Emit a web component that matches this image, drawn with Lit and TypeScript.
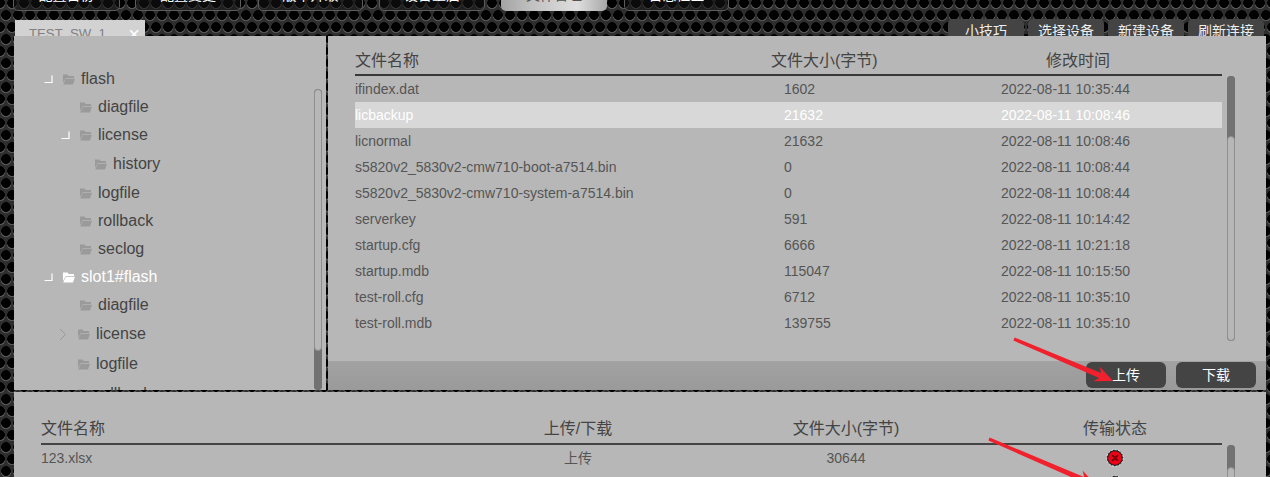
import { LitElement, html, css, svg } from "lit";
import { customElement } from "lit/decorators.js";

const NAV = [
  { t: "配置备份", w: 107, g: 15 },
  { t: "配置变更", w: 106, g: 17 },
  { t: "版本升级", w: 105, g: 16 },
  { t: "设备重启", w: 106, g: 16 },
  { t: "文件管理", w: 106, g: 17, active: true },
  { t: "日志检查", w: 105, g: 0 },
];
const ACTIONS = ["小技巧", "选择设备", "新建设备", "刷新连接"];

type Node = { n: string; x: number; e?: "open" | "closed"; m?: number; on?: boolean };
const TREE: Node[] = [
  { n: "flash", x: 30, e: "open" },
  { n: "diagfile", x: 47 },
  { n: "license", x: 47, e: "open" },
  { n: "history", x: 62, m: 1 },
  { n: "logfile", x: 47, m: 1 },
  { n: "rollback", x: 47 },
  { n: "seclog", x: 47 },
  { n: "slot1#flash", x: 30, e: "open", on: true },
  { n: "diagfile", x: 47 },
  { n: "license", x: 45, e: "closed", m: 1 },
  { n: "logfile", x: 45, m: 2 },
  { n: "rollback", x: 45, m: 2 },
];
const FILES = [
  ["ifindex.dat", "1602", "2022-08-11 10:35:44"],
  ["licbackup", "21632", "2022-08-11 10:08:46"],
  ["licnormal", "21632", "2022-08-11 10:08:46"],
  ["s5820v2_5830v2-cmw710-boot-a7514.bin", "0", "2022-08-11 10:08:44"],
  ["s5820v2_5830v2-cmw710-system-a7514.bin", "0", "2022-08-11 10:08:44"],
  ["serverkey", "591", "2022-08-11 10:14:42"],
  ["startup.cfg", "6666", "2022-08-11 10:21:18"],
  ["startup.mdb", "115047", "2022-08-11 10:15:50"],
  ["test-roll.cfg", "6712", "2022-08-11 10:35:10"],
  ["test-roll.mdb", "139755", "2022-08-11 10:35:10"],
];

const folder = svg`<svg class="folder" width="12" height="11" viewBox="0 0 12 11"><path d="M0 0.5h4.5l1.2 1.5H11v2H2.8L0 9z" fill="currentColor"/><path d="M2.8 4.7H12L10 10.5H0.2z" fill="currentColor"/></svg>`;
const exOpen = svg`<svg class="exp" width="9" height="9" viewBox="0 0 9 9"><path d="M8 0.5V7.5H0.5" fill="none" stroke="#fff" stroke-width="1.2"/></svg>`;
const exClosed = svg`<svg class="exp" width="9" height="13" viewBox="0 0 9 13"><path d="M1 1l5.5 5.5L1 12" fill="none" stroke="#999" stroke-width="1"/></svg>`;
const statusIcon = () => svg`<svg width="18" height="18" viewBox="0 0 18 18"><circle cx="9" cy="9" r="8.3" fill="#222" stroke="#e4e4e4" stroke-width="1" stroke-dasharray="2 1.5"/><circle cx="9" cy="9" r="6.8" fill="#f00014"/><path d="M6.2 6.2l5.6 5.6M11.8 6.2l-5.6 5.6" stroke="#6a000c" stroke-width="1.8"/></svg>`;

function arrow(x1: number, y1: number, x2: number, y2: number) {
  const dx = x2 - x1, dy = y2 - y1, len = Math.hypot(dx, dy);
  const ux = dx / len, uy = dy / len, nx = -uy, ny = ux;
  const p = (along: number, side: number) =>
    `${(x1 + ux * along + nx * side).toFixed(1)},${(y1 + uy * along + ny * side).toFixed(1)}`;
  const neck = len - 14;
  return svg`<polygon fill="#f0202c" points="${p(0, -1.6)} ${p(neck, -2.6)} ${p(neck - 4, -8)} ${p(len, 0)} ${p(neck - 4, 8)} ${p(neck, 2.6)} ${p(0, 1.6)}"/>`;
}

@customElement("app-root")
export class AppRoot extends LitElement {
  static styles = css`
    :host {
      display: block;
      position: relative;
      height: 100vh;
      overflow: hidden;
      font-family: "Liberation Sans", "Noto Sans CJK SC", sans-serif;
      font-size: 14px;
      color: #555;
      background-color: #2e2e2e;
      background-image:
        radial-gradient(circle at 6px 6px, #000 4.6px, rgba(0, 0, 0, 0) 5.1px),
        radial-gradient(circle at 12px 18px, #000 4.6px, rgba(0, 0, 0, 0) 5.1px),
        radial-gradient(circle at 0px 18px, #000 4.6px, rgba(0, 0, 0, 0) 5.1px),
        radial-gradient(circle at 6px 7px, #565656 4.8px, rgba(0, 0, 0, 0) 5.6px),
        radial-gradient(circle at 12px 19px, #565656 4.8px, rgba(0, 0, 0, 0) 5.6px),
        radial-gradient(circle at 0px 19px, #565656 4.8px, rgba(0, 0, 0, 0) 5.6px);
      background-size: 12px 24px;
      background-position: 0 9px;
    }
    .nav {
      display: flex;
      height: 11px;
      padding-left: 13px;
      align-items: flex-end;
    }
    .nav-item {
      flex: none;
      box-sizing: border-box;
      height: 30px;
      border: 1px solid #5c5c5c;
      border-radius: 0 0 5px 5px;
      background: rgba(20, 20, 20, 0.55);
      color: #fff;
      display: flex;
      align-items: flex-end;
      justify-content: center;
      line-height: 16px;
      padding-bottom: 7px;
    }
    .nav-item.active {
      border: none;
      color: #555;
      padding-bottom: 8px;
      background: linear-gradient(90deg, #a4a4a4 0%, #c2c2c2 30%, #dedede 72%, #a8a8a8 100%);
    }
    .bar {
      display: flex;
      justify-content: space-between;
      height: 25px;
      padding-left: 15px;
      padding-right: 6px;
    }
    .tab {
      box-sizing: border-box;
      width: 130px;
      height: 16px;
      margin-top: 9px;
      padding: 6px 5px 0 14px;
      background: #d2d2d2;
      color: #808080;
      font-size: 13.2px;
      line-height: 16px;
      overflow: hidden;
      display: flex;
      justify-content: space-between;
    }
    .tab .x {
      color: #fff;
      font-size: 20px;
      line-height: 16px;
    }
    .actions {
      display: flex;
      gap: 4px;
      margin-top: 8px;
    }
    .action {
      box-sizing: border-box;
      width: 76px;
      height: 17px;
      background: #444;
      color: #eee;
      border-radius: 5px 5px 0 0;
      text-align: center;
      line-height: 16px;
      padding-top: 4px;
      overflow: hidden;
    }
    .top {
      display: flex;
      gap: 2px;
      height: 354px;
      margin-left: 14px;
      margin-right: 4px;
    }
    .left {
      flex: none;
      width: 312px;
      background: #b7b7b7;
      display: flex;
      overflow: hidden;
    }
    .tree {
      flex: 1;
      padding-top: 29px;
      font-size: 16px;
      color: #444;
    }
    .node {
      display: flex;
      align-items: center;
      height: 28px;
      white-space: nowrap;
    }
    .node .slot {
      flex: none;
      width: 19px;
      display: flex;
      align-items: center;
    }
    .node .folder {
      flex: none;
      color: #9a9a9a;
      margin-right: 6px;
    }
    .node.on {
      color: #fff;
    }
    .node.on .folder {
      color: #fff;
    }
    .sb {
      flex: none;
      width: 8px;
      box-sizing: border-box;
      border-radius: 4px;
      display: flex;
      flex-direction: column;
      overflow: hidden;
    }
    .sb .thumb {
      box-sizing: border-box;
      flex: none;
      border: 1px solid #8f8f8f;
      background: #b7b7b7;
      border-radius: 4px;
    }
    .sb .track {
      flex: 1;
      background: #727272;
    }
    .sb-left {
      margin: 53px 4px 0 0;
      background: #727272;
    }
    .sb-left .thumb {
      height: 262px;
    }
    .right {
      flex: 1;
      background: #b7b7b7;
      display: flex;
      flex-direction: column;
    }
    .right-body {
      flex: 1;
      display: flex;
      padding-left: 27px;
    }
    .tbl {
      flex: none;
      width: 867px;
    }
    .head {
      box-sizing: border-box;
      height: 40px;
      padding-top: 14px;
      line-height: 22px;
      font-size: 16px;
      color: #444;
      border-bottom: 2px solid #383838;
      display: grid;
      grid-template-columns: 416px 275px 1fr;
      white-space: nowrap;
    }
    .row {
      display: grid;
      grid-template-columns: 429px 217px 1fr;
      height: 26px;
      line-height: 26px;
      white-space: nowrap;
    }
    .row.sel {
      background: #d8d8d8;
      color: #fff;
    }
    .sb-right {
      margin: 40px 0 0 5px;
      height: 265px;
      background: #727272;
    }
    .sb-right .track {
      flex: none;
      height: 60px;
    }
    .sb-right .thumb {
      flex: 1;
    }
    .foot {
      flex: none;
      height: 29px;
      box-sizing: border-box;
      background: linear-gradient(#a2a2a2, #9a9a9a);
      display: flex;
      justify-content: flex-end;
      gap: 10px;
      padding: 1px 10px 0 0;
    }
    .btn {
      width: 80px;
      height: 26px;
      border-radius: 6px;
      background: #444;
      color: #fff;
      text-align: center;
      line-height: 26px;
    }
    .bottom {
      margin: 2px 4px 0 14px;
      height: 120px;
      background: #b7b7b7;
      display: flex;
      padding-left: 27px;
    }
    .tbl2 {
      flex: none;
      width: 1181px;
    }
    .head2,
    .row2 {
      display: grid;
      grid-template-columns: 431px 212px 324px 214px;
      white-space: nowrap;
    }
    .head2 {
      box-sizing: border-box;
      height: 53px;
      padding-top: 26px;
      line-height: 22px;
      font-size: 16px;
      color: #444;
      border-bottom: 2px solid #444;
    }
    .head2 > :not(:first-child),
    .row2 > :not(:first-child) {
      text-align: center;
    }
    .row2 {
      height: 26px;
      line-height: 26px;
    }
    .row2 .st {
      display: flex;
      justify-content: center;
      align-items: center;
    }
    .sb-bottom {
      margin: 53px 0 0 5px;
      height: 67px;
      background: #727272;
    }
    .sb-bottom .track {
      flex: none;
      height: 22px;
    }
    .sb-bottom .thumb {
      flex: 1;
    }
    .arrows {
      position: absolute;
      inset: 0;
      pointer-events: none;
    }
  `;

  render() {
    return html`
      <div class="nav">
        ${NAV.map(
          (n) => html`<div
            class="nav-item ${n.active ? "active" : ""}"
            style="width:${n.w}px;margin-right:${n.g}px"
          >${n.t}</div>`
        )}
      </div>
      <div class="bar">
        <div class="tab"><span>TEST_SW_1</span><span class="x">×</span></div>
        <div class="actions">${ACTIONS.map((a) => html`<div class="action">${a}</div>`)}</div>
      </div>
      <div class="top">
        <div class="left">
          <div class="tree">
            ${TREE.map(
              (t) => html`<div
                class="node ${t.on ? "on" : ""}"
                style="padding-left:${t.x}px;margin-top:${t.m ?? 0}px"
              >
                <span class="slot">${t.e === "open" ? exOpen : t.e === "closed" ? exClosed : ""}</span>
                ${folder}<span>${t.n}</span>
              </div>`
            )}
          </div>
          <div class="sb sb-left"><div class="thumb"></div><div class="track"></div></div>
        </div>
        <div class="right">
          <div class="right-body">
            <div class="tbl">
              <div class="head"><span>文件名称</span><span>文件大小(字节)</span><span>修改时间</span></div>
              ${FILES.map(
                (f, i) => html`<div class="row ${i === 1 ? "sel" : ""}">
                  <span>${f[0]}</span><span>${f[1]}</span><span>${f[2]}</span>
                </div>`
              )}
            </div>
            <div class="sb sb-right"><div class="track"></div><div class="thumb"></div></div>
          </div>
          <div class="foot"><div class="btn">上传</div><div class="btn">下载</div></div>
        </div>
      </div>
      <div class="bottom">
        <div class="tbl2">
          <div class="head2"><span>文件名称</span><span>上传/下载</span><span>文件大小(字节)</span><span>传输状态</span></div>
          <div class="row2"><span>123.xlsx</span><span>上传</span><span>30644</span><span class="st">${statusIcon()}</span></div>
          <div class="row2"><span></span><span></span><span></span><span class="st">${statusIcon()}</span></div>
        </div>
        <div class="sb sb-bottom"><div class="track"></div><div class="thumb"></div></div>
      </div>
      <svg class="arrows" width="1270" height="477" viewBox="0 0 1270 477">
        ${arrow(1014, 339, 1113, 381)} ${arrow(989, 439, 1096, 485)}
      </svg>
    `;
  }
}
